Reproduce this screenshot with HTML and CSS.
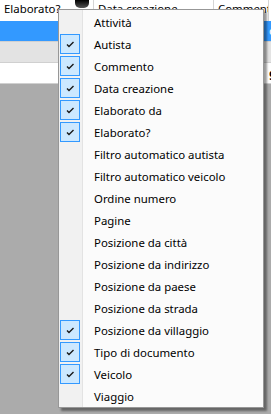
FILE: index.html
```html
<!DOCTYPE html>
<html lang="it">

<head>
    <meta charset="UTF-8">
    <title>Colonne</title>
    <link rel="stylesheet" href="styles.css">
</head>

<body>
    <div class="grid">
        <div class="grid-header">
            <div class="col col-1">Elaborato?<span class="filter-icon"></span></div>
            <div class="col col-2">Data creazione</div>
            <div class="col col-3">Commento</div>
            <div class="col col-4"></div>
        </div>
        <div class="grid-row row-selected">
            <div class="col col-1"></div>
            <div class="col col-2"></div>
            <div class="col col-3"></div>
            <div class="col col-4">d</div>
        </div>
        <div class="grid-row row-alt">
            <div class="col col-1"></div>
            <div class="col col-2"></div>
            <div class="col col-3"></div>
            <div class="col col-4"></div>
        </div>
        <div class="grid-row">
            <div class="col col-1"></div>
            <div class="col col-2"></div>
            <div class="col col-3"></div>
            <div class="col col-4 bold">g</div>
        </div>
    </div>

    <!-- column chooser menu -->
    <ul class="context-menu">
        <li class="menu-item"><span class="check"></span>Attività</li>
        <li class="menu-item checked"><span class="check"><svg viewBox="0 0 18 18"><path d="M6 9.5 L8 11.5 L12.5 7"/></svg></span>Autista</li>
        <li class="menu-item checked"><span class="check"><svg viewBox="0 0 18 18"><path d="M6 9.5 L8 11.5 L12.5 7"/></svg></span>Commento</li>
        <li class="menu-item checked"><span class="check"><svg viewBox="0 0 18 18"><path d="M6 9.5 L8 11.5 L12.5 7"/></svg></span>Data creazione</li>
        <li class="menu-item checked"><span class="check"><svg viewBox="0 0 18 18"><path d="M6 9.5 L8 11.5 L12.5 7"/></svg></span>Elaborato da</li>
        <li class="menu-item checked"><span class="check"><svg viewBox="0 0 18 18"><path d="M6 9.5 L8 11.5 L12.5 7"/></svg></span>Elaborato?</li>
        <li class="menu-item"><span class="check"></span>Filtro automatico autista</li>
        <li class="menu-item"><span class="check"></span>Filtro automatico veicolo</li>
        <li class="menu-item"><span class="check"></span>Ordine numero</li>
        <li class="menu-item"><span class="check"></span>Pagine</li>
        <li class="menu-item"><span class="check"></span>Posizione da città</li>
        <li class="menu-item"><span class="check"></span>Posizione da indirizzo</li>
        <li class="menu-item"><span class="check"></span>Posizione da paese</li>
        <li class="menu-item"><span class="check"></span>Posizione da strada</li>
        <li class="menu-item checked"><span class="check"><svg viewBox="0 0 18 18"><path d="M6 9.5 L8 11.5 L12.5 7"/></svg></span>Posizione da villaggio</li>
        <li class="menu-item checked"><span class="check"><svg viewBox="0 0 18 18"><path d="M6 9.5 L8 11.5 L12.5 7"/></svg></span>Tipo di documento</li>
        <li class="menu-item checked"><span class="check"><svg viewBox="0 0 18 18"><path d="M6 9.5 L8 11.5 L12.5 7"/></svg></span>Veicolo</li>
        <li class="menu-item"><span class="check"></span>Viaggio</li>
    </ul>
</body>

</html>
```

FILE: styles.css
```css
body {
    margin: 0;
    font-family: "Noto Sans", sans-serif;
    font-size: 11.4px;
    color: #000;
    background-color: #ababab;
    overflow: hidden;
}

.grid {
    width: 271px;
}

.grid-header,
.grid-row {
    display: flex;
    height: 21px;
}

.grid-header {
    background-color: #fff;
    height: 21px;
}

.col {
    box-sizing: border-box;
    flex: none;
    padding-left: 4px;
    line-height: 18px;
    white-space: nowrap;
    overflow: hidden;
    position: relative;
}

.grid-header .col {
    border-right: 1px solid #d5d5d5;
}

.col-1 {
    width: 94px;
}

.col-2 {
    width: 120px;
}

.col-3 {
    width: 55px;
}

.col-4 {
    width: 30px;
    padding-left: 0;
    border-right: none;
}

.filter-icon {
    position: absolute;
    left: 75px;
    top: 0;
    width: 14px;
    height: 8px;
    background: linear-gradient(#000, #555);
    border-radius: 0 0 5px 5px;
}

.grid-row {
    background-color: #fff;
    border-bottom: 1px solid #d0d0d0;
    height: 20px;
}

.grid-row .col {
    line-height: 20px;
}

.row-selected {
    background-color: #3399ff;
    color: #fff;
}

.row-alt {
    background-color: #e3e3e3;
}

.bold {
    font-weight: bold;
}

/* menu */
.context-menu {
    position: absolute;
    left: 58px;
    top: 9px;
    width: 204px;
    margin: 0;
    padding: 1px 0 0 0;
    list-style: none;
    border: 1px solid #979797;
    background: linear-gradient(to right, #f1f1f1 0, #f1f1f1 23px, #e3e3e3 23px, #e3e3e3 24px, #fbfbfb 24px);
    box-shadow: 3px 3px 2px rgba(0, 0, 0, 0.4);
}

.menu-item {
    display: flex;
    align-items: center;
    height: 22px;
    white-space: nowrap;
}

.check {
    box-sizing: border-box;
    width: 20px;
    height: 20px;
    margin: 0 14px 0 1px;
    display: flex;
}

.check svg {
    width: 18px;
    height: 18px;
    fill: none;
    stroke: #1a1a1a;
    stroke-width: 1.4;
}

.checked .check {
    border: 1px solid #3399ff;
    background-color: #cce8ff;
}
```
